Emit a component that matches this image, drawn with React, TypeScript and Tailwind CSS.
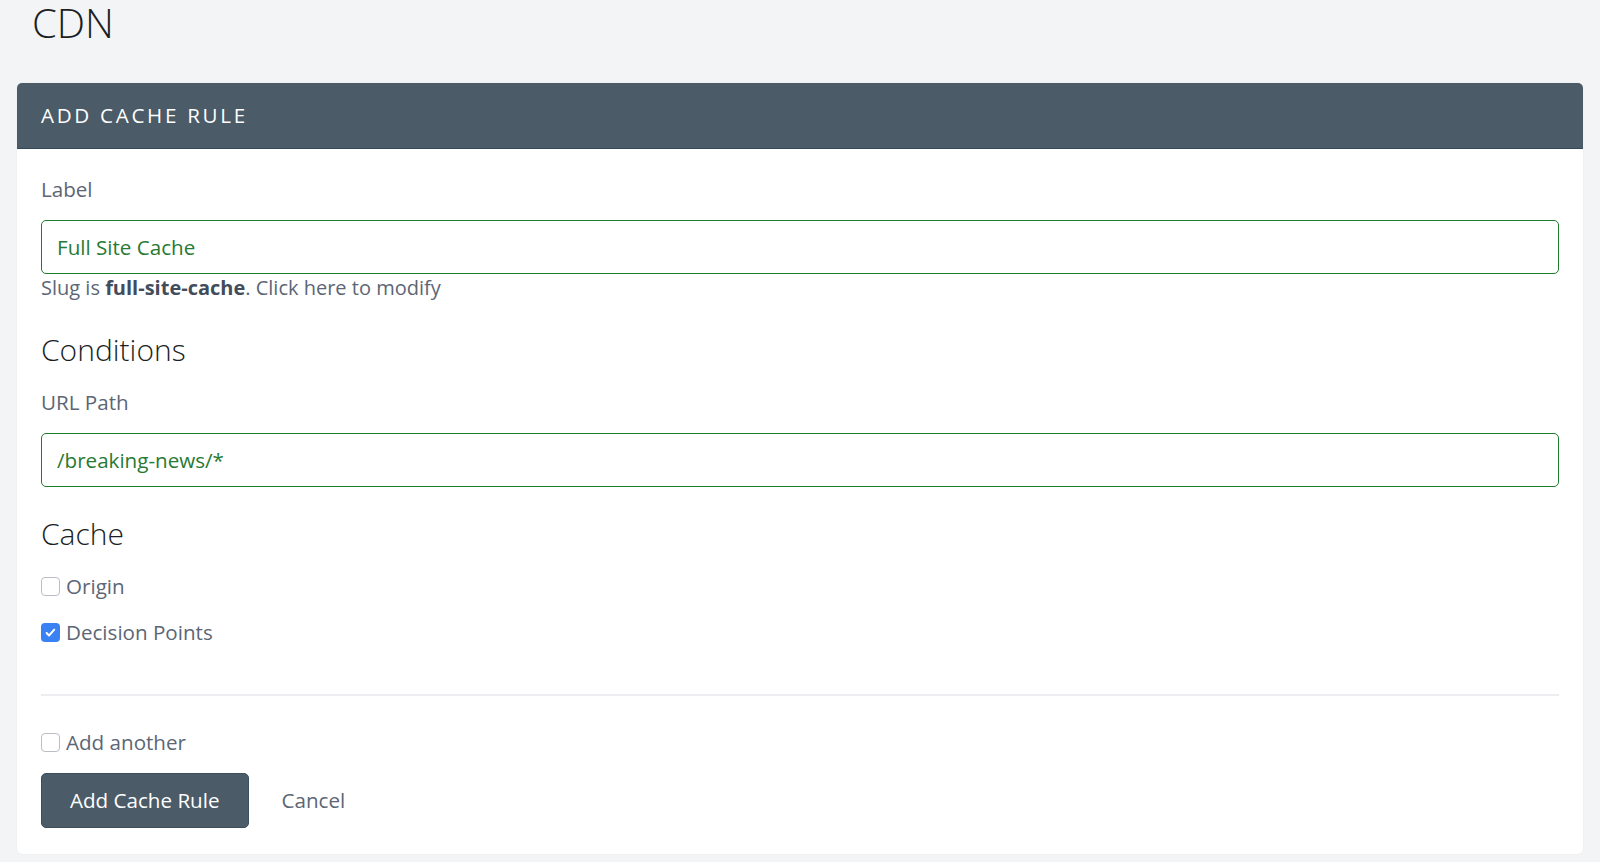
import React from 'react';

const font = { fontFamily: '"Open Sans", "Liberation Sans", sans-serif' };

function Checkbox({ checked, label }: { checked?: boolean; label: string }) {
    return (
        <label className="flex items-center gap-[6px] h-[28px] text-[20.6px] leading-[28px] text-[#5c6675]">
            {checked ? (
                <span className="w-[19px] h-[19px] rounded-[4px] bg-[#3a82f3] flex items-center justify-center">
                    <svg width="13" height="13" viewBox="0 0 16 16" fill="none">
                        <path d="M3.2 8.6l3 3.1 6.4-7.2" stroke="#fff" strokeWidth="2.4" strokeLinecap="round" strokeLinejoin="round" />
                    </svg>
                </span>
            ) : (
                <span className="w-[19px] h-[19px] rounded-[4px] bg-white border border-[#b9bec6]" />
            )}
            <span>{label}</span>
        </label>
    );
}

function Field({ label, value }: { label: string; value: string }) {
    return (
        <div>
            <div className="text-[20.6px] leading-[28px] text-[#5c6675]">{label}</div>
            <div className="mt-[17px] h-[54px] rounded-[5px] border-[1.5px] border-[#1f7b2e] flex items-center px-[15px] text-[20.6px] text-[#267a33]">
                {value}
            </div>
        </div>
    );
}

export default function App() {
    return (
        <div className="min-h-[862px] bg-[#f3f4f6] px-[17px] pb-[9px]" style={font}>
            {/* --- PAGE TITLE --- */}
            <h1 className="pt-[3px] pl-[15px] text-[40px] leading-[40px] font-light text-[#1b1f24] mb-[40px]">CDN</h1>

            {/* --- CARD --- */}
            <div className="bg-white rounded-[5px] overflow-hidden shadow-[0_0_2px_rgba(0,0,0,0.06)]">
                <div className="h-[66px] bg-[#4b5b68] border-b border-[#34495a] flex items-center px-[24px]">
                    <h2 className="text-[20.6px] tracking-[2.7px] text-white uppercase">Add Cache Rule</h2>
                </div>

                <div className="px-[24px] pt-[26px] pb-[26px]">
                    <Field label="Label" value="Full Site Cache" />
                    <p className="text-[20px] leading-[28px] text-[#5c6675]">
                        Slug is <span className="font-bold text-[#434c5a]">full-site-cache</span>. Click here to modify
                    </p>

                    <h3 className="mt-[28px] text-[30px] leading-[40px] font-light text-[#1b1f24]">Conditions</h3>
                    <div className="mt-[18px]">
                        <Field label="URL Path" value="/breaking-news/*" />
                    </div>

                    <h3 className="mt-[27px] text-[30px] leading-[40px] font-light text-[#1b1f24]">Cache</h3>
                    <div className="mt-[18px] flex flex-col gap-[18px]">
                        <Checkbox label="Origin" />
                        <Checkbox label="Decision Points" checked />
                    </div>

                    <div className="mt-[48px] border-t-2 border-[#eceef1]" />

                    <div className="mt-[32px]">
                        <Checkbox label="Add another" />
                    </div>

                    <div className="mt-[17px] flex items-center">
                        <button className="h-[55px] px-[28px] rounded-[5px] bg-[#4b5b68] border border-[#3d4f5c] text-white text-[20.6px]">
                            Add Cache Rule
                        </button>
                        <button className="ml-[33px] text-[20.6px] text-[#5c6675]">Cancel</button>
                    </div>
                </div>
            </div>
        </div>
    );
}
